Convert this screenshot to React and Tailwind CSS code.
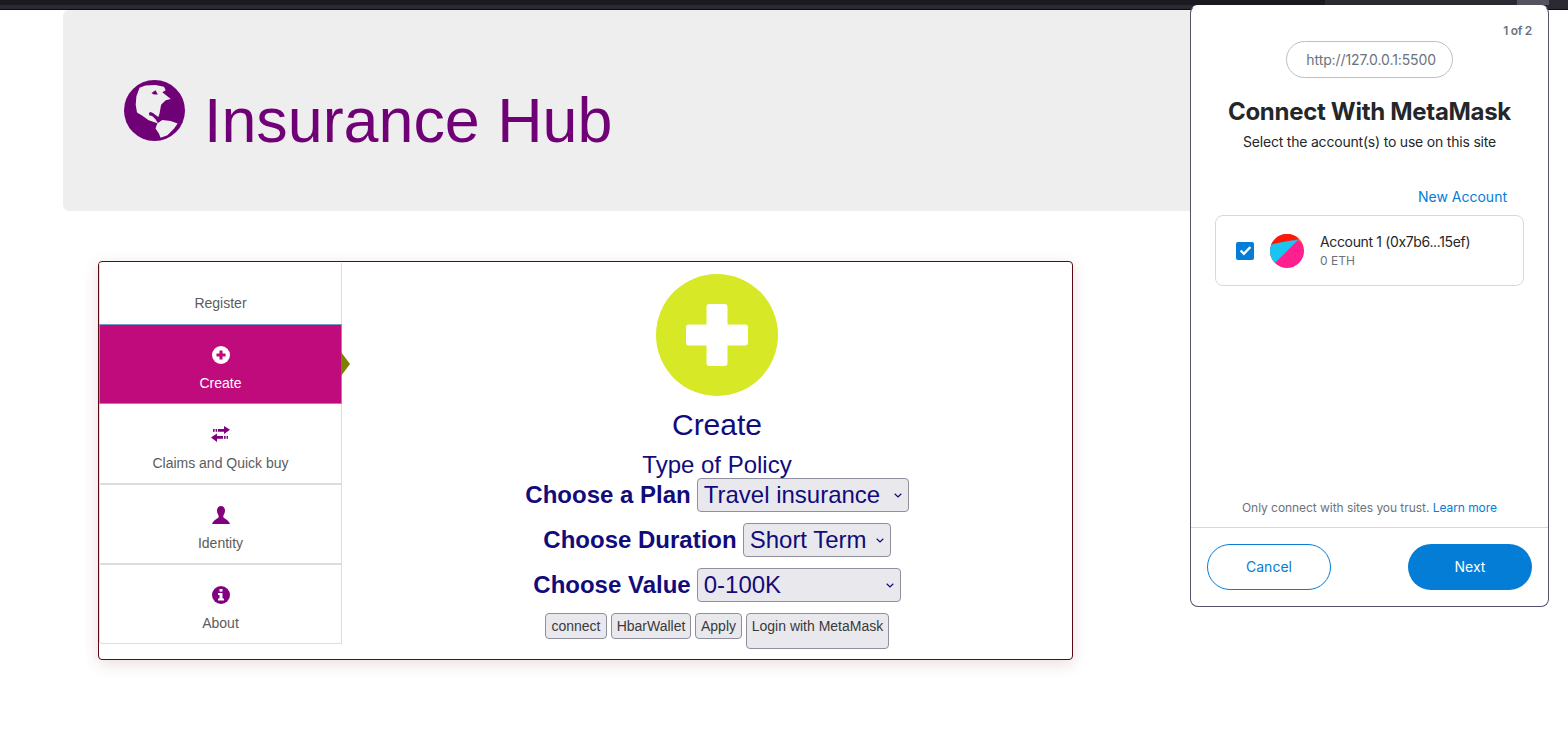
const navy = "text-[#110b7c]";
const arial = "font-['Liberation_Sans',Arial,sans-serif]";

function Globe() {
  return (
    <svg viewBox="0 0 60 60" className="w-[61px] h-[61px] shrink-0">
      <circle cx="30" cy="30" r="30" fill="#6f0076" />
      <path
        fill="#eeeeee"
        fillRule="evenodd"
        d="M15.3 7.7 L21 5.3 L31 5 L39.3 6.7 L41 10 L37.7 12 L46 18.7 L41 20 L36.5 24.3 L35 32.7 L33.8 36.5 L31 34.5 L28.5 32.5 L26 31.5 L24.5 32.5 L25 35 L27.7 35.3 L31 38.5 L33.5 42.7 L24.3 39.5 L17.7 35 L12.8 32 L11.5 24.3 L12.2 16 L14 11 Z M27 12.7 L31 10 L33.3 14.3 L29.3 14.3 Z"
      />
      <path
        fill="#eeeeee"
        d="M32.7 42.7 L37.7 39.3 L46 40.3 L52.7 42.7 L49.3 47.7 L42.7 54.3 L36 56.7 L34.3 52.7 L31 47.7 Z"
      />
    </svg>
  );
}

function PlusCircle({ size, bg, fg }) {
  return (
    <svg viewBox="0 0 122 122" width={size} height={size} className="block">
      <circle cx="61" cy="61" r="61" fill={bg} />
      <path
        fill={fg}
        d="M50.5 33 a3 3 0 0 1 3 -3 h15 a3 3 0 0 1 3 3 v17.5 h17.5 a3 3 0 0 1 3 3 v15 a3 3 0 0 1 -3 3 h-17.5 v17.5 a3 3 0 0 1 -3 3 h-15 a3 3 0 0 1 -3 -3 v-17.5 h-17.5 a3 3 0 0 1 -3 -3 v-15 a3 3 0 0 1 3 -3 h17.5 Z"
      />
    </svg>
  );
}

function Transfer() {
  return (
    <svg viewBox="0 0 19 16" width="19" height="16" className="block" fill="#800080">
      <rect x="2" y="3" width="1.6" height="2.8" />
      <rect x="4.6" y="3" width="1.6" height="2.8" />
      <path d="M7 3 H13 V0 L19 3.8 L13 8 V5.8 H7 Z" />
      <rect x="15.6" y="10" width="1.4" height="2.8" />
      <rect x="13" y="10" width="1.6" height="2.8" />
      <path d="M12 10 H6 V7.6 L0 11.6 L6 16 V12.8 H12 Z" />
    </svg>
  );
}

function UserGlyph() {
  return (
    <svg viewBox="0 0 18 18" width="18" height="18" className="block" fill="#800080">
      <path d="M9 0 C6.4 0 5 2 5 4.6 C5 6.8 6 8.6 6.6 9.4 V11.2 C6 12.6 1.6 13.6 0 18 H18 C16.4 13.6 12 12.6 11.4 11.2 V9.4 C12 8.6 13 6.8 13 4.6 C13 2 11.6 0 9 0 Z" />
    </svg>
  );
}

function InfoGlyph() {
  return (
    <svg viewBox="0 0 18 18" width="18" height="18" className="block">
      <circle cx="9" cy="9" r="9" fill="#800080" />
      <rect x="7.5" y="3" width="3" height="2.6" fill="#fff" />
      <path d="M6 7 H10.5 V12.4 H12 V14.4 H6 V12.4 H7.5 V9 H6 Z" fill="#fff" />
    </svg>
  );
}

function SideItem({ icon, label, cls, iconGap = "mb-[11px]", active }) {
  return (
    <div className={"relative flex flex-col items-center justify-end " + cls}>
      {icon && <div className={iconGap}>{icon}</div>}
      <span className="text-[14px] leading-[16px]">{label}</span>
      {active && (
        <div className="absolute left-[100%] top-[27px] w-0 h-0 border-y-[12px] border-y-transparent border-l-[9px] border-l-[#808000]" />
      )}
    </div>
  );
}

function Row({ label, width, options }) {
  return (
    <div className="flex justify-center items-center gap-[6px]">
      <span className={"text-[24px] font-bold leading-[34px] " + navy}>{label}</span>
      <div
        className="relative h-[34px] bg-[#e9e9ed] border border-[#8f8f9d] rounded-[4px] flex items-start"
        style={{ width }}
      >
        <select className={"appearance-none w-full h-[29px] -mt-[2px] text-[24px] bg-transparent border-0 pl-[6px] " + navy}>
          {options.map((o) => (
            <option key={o}>{o}</option>
          ))}
        </select>
        <svg viewBox="0 0 8 5" width="8" height="5" className="absolute right-[6px] top-[14px] pointer-events-none">
          <path d="M0.7 0.8 L4 4 L7.3 0.8" fill="none" stroke="#110b7c" strokeWidth="1.2" />
        </svg>
      </div>
    </div>
  );
}

function Btn({ children, cls }) {
  return (
    <button className={"bg-[#e9e9ed] border border-[#8f8f9d] rounded-[4px] text-[14px] leading-[16px] text-[#3a3a3a] flex items-start justify-center pt-[4px] " + cls}>
      {children}
    </button>
  );
}

function Popup() {
  return (
    <div className="absolute left-[1190px] top-[5px] w-[359px] h-[602px] bg-white border border-[#55536a] border-t-white rounded-[8px] flex flex-col font-['Inter',sans-serif]">
      <div className="flex justify-end pt-[18px] pr-[16px] text-[12px] leading-[14px] font-semibold text-[#6a737d] tracking-[-0.3px]">
        1 of 2
      </div>
      <div className="flex justify-center mt-[3px]">
        <div className="w-[167px] h-[37px] rounded-full border border-[#bbc0c5] flex items-center justify-end pr-[16px] text-[14px] text-[#6a737d] tracking-[-0.1px]">
          http://127.0.0.1:5500
        </div>
      </div>
      <div className="text-center mt-[19px] text-[24px] leading-[30px] font-bold text-[#24272a] tracking-[-0.3px]">
        Connect With MetaMask
      </div>
      <div className="text-center mt-[5px] text-[14px] leading-[20px] text-[#24272a] tracking-[-0.2px]">
        Select the account(s) to use on this site
      </div>
      <div className="flex justify-end pr-[41px] mt-[35px] text-[14px] leading-[20px] text-[#037dd6]">New Account</div>
      <div className="mx-[24px] mt-[8px] h-[71px] border border-[#d6d9dc] rounded-[8px] flex items-center pl-[20px]">
        <div className="w-[18px] h-[18px] rounded-[2px] bg-[#037dd6] flex items-center justify-center">
          <svg viewBox="0 0 12 10" width="13" height="11">
            <path d="M1.5 5 L4.5 8 L10.5 1.8" fill="none" stroke="#fff" strokeWidth="2.2" />
          </svg>
        </div>
        <svg viewBox="0 0 34 34" width="34" height="34" className="ml-[16px]">
          <defs>
            <clipPath id="av">
              <circle cx="17" cy="17" r="17" />
            </clipPath>
          </defs>
          <g clipPath="url(#av)">
            <rect width="34" height="34" fill="#ff1f8e" />
            <path d="M0 8 L28 6 L4 30 L0 34 Z" fill="#18c5f0" />
            <path d="M0 0 H34 V5 L28 5 L3 10 L0 12 Z" fill="#fb1a06" />
            <path d="M27 5 L34 2 V12 Z" fill="#f26a0a" />
          </g>
        </svg>
        <div className="ml-[16px] pt-[2px] flex flex-col">
          <span className="text-[14px] leading-[18px] text-[#24272a] tracking-[-0.35px]">Account 1 (0x7b6...15ef)</span>
          <span className="text-[12px] leading-[20px] text-[#6a737d]">0 ETH</span>
        </div>
      </div>
      <div className="flex-1 flex items-end justify-center pb-[10px] text-[12px] leading-[18px] text-[#6a737d] tracking-[-0.05px]">
        <span>
          Only connect with sites you trust. <span className="text-[#037dd6]">Learn more</span>
        </span>
      </div>
      <div className="border-t border-[#d6d9dc] px-[16px] pt-[16px] pb-[16px] flex justify-between">
        <div className="w-[124px] h-[46px] rounded-full border border-[#037dd6] flex items-center justify-center text-[14px] leading-[18px] pb-[1px] text-[#037dd6]">
          Cancel
        </div>
        <div className="w-[124px] h-[46px] rounded-full bg-[#037dd6] flex items-center justify-center text-[14px] leading-[18px] pb-[1px] text-white">
          Next
        </div>
      </div>
    </div>
  );
}

export default function App() {
  return (
    <div className={"relative h-[738px] overflow-hidden bg-white " + arial}>
      <div className="h-[10px] flex flex-col">
        <div className="h-[5px] flex">
          <div className="w-[1325px] bg-[#1b1a21]" />
          <div className="w-[192px] bg-[#2b2a33]" />
          <div className="w-[32px] bg-[#55535f]" />
          <div className="flex-1 bg-[#2b2a33]" />
        </div>
        <div className="h-[4px] bg-[#2b2a33]" />
        <div className="h-[1px] bg-[#0c0c0d]" />
      </div>

      <div className="ml-[63px] w-[1200px] h-[201px] bg-[#eeeeee] rounded-[6px] flex items-center pl-[61px]">
        <Globe />
        <span className="ml-[19px] mt-[18px] text-[62.8px] leading-[72px] text-[#6f0076]">Insurance Hub</span>
      </div>

      <div className="ml-[98px] mt-[50px] w-[975px] h-[399px] border border-[#5a0a14] rounded-[4px] bg-white shadow-[0_4px_16px_rgba(120,20,20,0.14)] flex">
        <div className="w-[243px] shrink-0 pt-[1px] text-[#5c5c5c]">
          <SideItem label="Register" cls="h-[61px] pb-[13px] border-x border-[#dddddd]" />
          <SideItem
            label="Create"
            active
            icon={<PlusCircle size={18} bg="#ffffff" fg="#c00b7d" />}
            cls="h-[80px] pb-[12px] bg-[#c00b7d] text-white border border-[#6d9ec9]"
          />
          <SideItem
            label="Claims and Quick buy"
            icon={<Transfer />}
            iconGap="mb-[13px]"
            cls="h-[81px] pb-[12px] border-x border-b-2 border-[#dddddd]"
          />
          <SideItem label="Identity" icon={<UserGlyph />} cls="h-[80px] pb-[12px] border-x border-b-2 border-[#dddddd]" />
          <SideItem label="About" icon={<InfoGlyph />} cls="h-[79px] pb-[12px] border-x border-b border-[#dddddd] rounded-bl-[3px]" />
        </div>
        <div className="flex-1 flex flex-col items-center pt-[12px] pl-[20px]">
          <PlusCircle size={122} bg="#d6e826" fg="#ffffff" />
          <div className={"mt-[12px] text-[30px] leading-[34px] " + navy}>Create</div>
          <div className={"mt-[9px] text-[24px] leading-[28px] " + navy}>Type of Policy</div>
          <div className="flex flex-col gap-[11px] -mt-[1px]">
            <Row label="Choose a Plan" width={212} options={["Travel insurance"]} />
            <Row label="Choose Duration" width={148} options={["Short Term"]} />
            <Row label="Choose Value" width={204} options={["0-100K"]} />
          </div>
          <div className="mt-[11px] flex items-start gap-[4px]">
            <Btn cls="w-[62px] h-[26px]">connect</Btn>
            <Btn cls="w-[80px] h-[26px]">HbarWallet</Btn>
            <Btn cls="w-[47px] h-[26px]">Apply</Btn>
            <Btn cls="w-[143px] h-[36px]">Login with MetaMask</Btn>
          </div>
        </div>
      </div>

      <Popup />
    </div>
  );
}
